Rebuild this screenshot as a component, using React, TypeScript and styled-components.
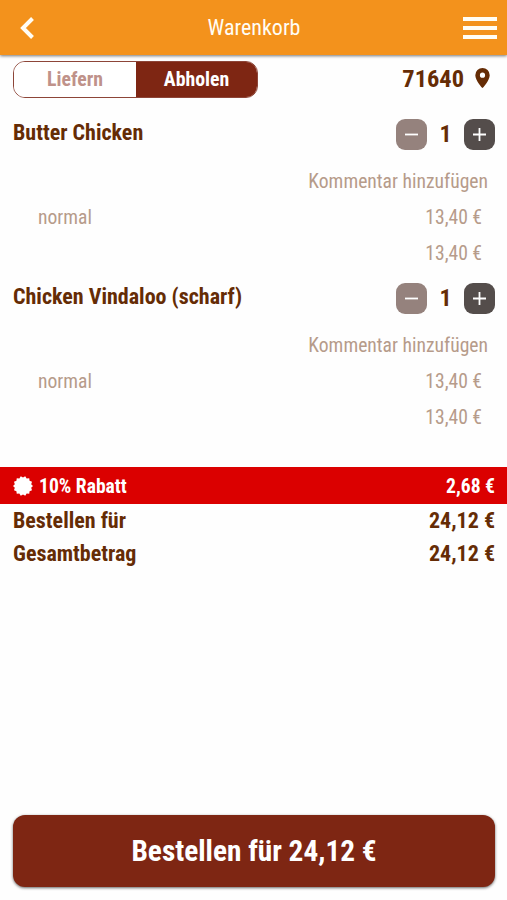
import React from "react";
import styled, { createGlobalStyle } from "styled-components";

const Global = createGlobalStyle`
  * { box-sizing: border-box; }
  body { margin: 0; background: #fff; }
  button { font: inherit; font-stretch: inherit; border: 0; padding: 0; margin: 0; background: none; color: inherit; }
`;

const Screen = styled.div`
  display: flex;
  flex-direction: column;
  width: 507px;
  height: 900px;
  background: #fefefe;
  color: #652c05;
  font-family: "Roboto Condensed", Roboto, sans-serif;
  font-stretch: 75%;
  font-size: 22px;
  overflow: hidden;
`;

/* Single line of text with a fixed line box. */
const Text = styled.span<{ $size?: number; $weight?: number }>`
  display: block;
  white-space: nowrap;
  line-height: 26px;
  font-size: ${(p) => p.$size ?? 22}px;
  font-weight: ${(p) => p.$weight ?? 700};
`;

/* Label inside a bar or segment, nudged down to its optical centre. */
const BarText = styled(Text)<{ $drop?: number }>`
  padding-top: ${(p) => p.$drop ?? 1}px;
`;

const Header = styled.header`
  display: grid;
  grid-template-columns: 40px 1fr 40px;
  align-items: center;
  flex: none;
  height: 55px;
  padding: 0 10px 0 13px;
  background: #f3921c;
  color: #fffdf5;
  box-shadow: 0 1px 3px rgba(0, 0, 0, 0.55);
`;

const Title = styled(Text)`
  padding-right: 2px;
  text-align: center;
`;

const IconButton = styled.button<{ $end?: boolean }>`
  display: flex;
  align-items: center;
  justify-content: ${(p) => (p.$end ? "flex-end" : "flex-start")};
`;

const Controls = styled.div`
  display: flex;
  justify-content: space-between;
  align-items: center;
  height: 48px;
  padding: 0 17px 0 13px;
`;

const Toggle = styled.div`
  display: flex;
  width: 245px;
  height: 37px;
  border: 1px solid #8d4538;
  border-radius: 12px;
  overflow: hidden;
`;

const Segment = styled.button<{ $active?: boolean; $width: number }>`
  display: flex;
  align-items: center;
  justify-content: center;
  width: ${(p) => p.$width}px;
  background: ${(p) => (p.$active ? "#7e2613" : "#fff")};
  color: ${(p) => (p.$active ? "#fff" : "#bf928a")};
`;

const Location = styled.div`
  display: flex;
  align-items: center;
  gap: 11px;
`;

const Item = styled.section`
  height: 164px;
`;

const ItemHead = styled.div`
  display: flex;
  justify-content: space-between;
  align-items: center;
  height: 61px;
  padding: 1px 12px 0 13px;
`;

const ItemName = styled(Text)`
  margin-top: -3px;
`;

const Stepper = styled.div`
  display: grid;
  grid-template-columns: 31px 37px 31px;
  align-items: center;
  justify-items: center;
`;

const StepButton = styled.button<{ $muted?: boolean }>`
  display: grid;
  place-items: center;
  width: 31px;
  height: 31px;
  border-radius: 9px;
  background: ${(p) => (p.$muted ? "#95827d" : "#544d4b")};
`;

const ItemLine = styled.div<{ $right: number }>`
  display: flex;
  align-items: center;
  justify-content: space-between;
  height: 36px;
  padding: 0 ${(p) => p.$right}px 0 38px;
  color: #b69b8a;
`;

const Discount = styled.div`
  display: flex;
  align-items: center;
  justify-content: space-between;
  height: 37px;
  margin-top: 36px;
  padding: 0 12px 0 13px;
  background: #db0000;
  color: #fff;
`;

const DiscountLabel = styled.div`
  display: flex;
  align-items: center;
  gap: 6px;
`;

const TotalRow = styled.div`
  display: flex;
  align-items: center;
  justify-content: space-between;
  height: 33px;
  padding: 0 12px 0 13px;
`;

const OrderButton = styled.button`
  display: flex;
  align-items: center;
  justify-content: center;
  flex: none;
  height: 72px;
  margin: auto 12px 13px 13px;
  border-radius: 12px;
  background: #7e2613;
  color: #fff;
  box-shadow: 0 1px 3px rgba(0, 0, 0, 0.6);
`;

const BackIcon = () => (
  <svg width="28" height="24" viewBox="0 0 28 24">
    <path d="M19.5 2.5 10 12l9.500 9.500" fill="none" stroke="currentColor" strokeWidth="4" />
  </svg>
);

const MenuIcon = () => (
  <svg width="34" height="24" viewBox="0 0 34 24">
    <path d="M0 3h34M0 12h34M0 21h34" stroke="currentColor" strokeWidth="4" />
  </svg>
);

const PinIcon = () => (
  <svg width="15" height="22" viewBox="0 0 15 22">
    <path
      fill="currentColor"
      fillRule="evenodd"
      d="M7.500 0a7.200 7.200 0 0 0-7.200 7.200c0 5.300 7.200 12.900 7.200 12.900s7.200-7.600 7.200-12.900A7.200 7.200 0 0 0 7.500 0Zm0 9.800a2.600 2.600 0 1 1 0-5.200 2.600 2.600 0 0 1 0 5.200Z"
    />
  </svg>
);

const sealPoints = Array.from({ length: 28 }, (_, i) => {
  const radius = i % 2 ? 8.4 : 10;
  const angle = (i / 28) * Math.PI * 2;
  return `${(10 + radius * Math.cos(angle)).toFixed(2)},${(10 + radius * Math.sin(angle)).toFixed(2)}`;
}).join(" ");

const SealIcon = () => (
  <svg width="20" height="20" viewBox="0 0 20 20">
    <polygon points={sealPoints} fill="currentColor" />
  </svg>
);

const StepIcon = ({ plus }: { plus?: boolean }) => (
  <svg width="15" height="15" viewBox="0 0 15 15">
    <path d={plus ? "M1 7.500h13M7.500 1v13" : "M1 7.500h13"} stroke="#fff" strokeWidth="1.800" />
  </svg>
);

const items = [
  { name: "Butter Chicken", variant: "normal", count: 1, price: "13,40 €", total: "13,40 €" },
  { name: "Chicken Vindaloo (scharf)", variant: "normal", count: 1, price: "13,40 €", total: "13,40 €" },
];

const totals = [
  { label: "Bestellen für", value: "24,12 €" },
  { label: "Gesamtbetrag", value: "24,12 €" },
];

export default function App() {
  return (
    <Screen>
      <Global />
      <Header>
        <IconButton aria-label="Zurück"><BackIcon /></IconButton>
        <Title $weight={400}>Warenkorb</Title>
        <IconButton $end aria-label="Menü"><MenuIcon /></IconButton>
      </Header>
      <Controls>
        <Toggle>
          <Segment $width={122}><BarText $size={19.8}>Liefern</BarText></Segment>
          <Segment $width={121} $active><BarText $size={19.8}>Abholen</BarText></Segment>
        </Toggle>
        <Location>
          <Text $size={24.4}>71640</Text>
          <PinIcon />
        </Location>
      </Controls>
      {items.map((item) => (
        <Item key={item.name}>
          <ItemHead>
            <ItemName>{item.name}</ItemName>
            <Stepper>
              <StepButton $muted aria-label="Weniger"><StepIcon /></StepButton>
              <Text $size={24}>{item.count}</Text>
              <StepButton aria-label="Mehr"><StepIcon plus /></StepButton>
            </Stepper>
          </ItemHead>
          <ItemLine $right={19}>
            <span />
            <Text $size={19.6} $weight={400}>Kommentar hinzufügen</Text>
          </ItemLine>
          <ItemLine $right={25}>
            <Text $size={19.6} $weight={400}>{item.variant}</Text>
            <Text $size={19.6} $weight={400}>{item.price}</Text>
          </ItemLine>
          <ItemLine $right={25}>
            <span />
            <Text $size={19.6} $weight={400}>{item.total}</Text>
          </ItemLine>
        </Item>
      ))}
      <Discount>
        <DiscountLabel>
          <SealIcon />
          <BarText $size={19.6} $drop={2}>10% Rabatt</BarText>
        </DiscountLabel>
        <BarText $size={19.6} $drop={2}>2,68 €</BarText>
      </Discount>
      {totals.map((row) => (
        <TotalRow key={row.label}>
          <Text>{row.label}</Text>
          <Text>{row.value}</Text>
        </TotalRow>
      ))}
      <OrderButton><Text $size={29.3}>Bestellen für 24,12 €</Text></OrderButton>
    </Screen>
  );
}
